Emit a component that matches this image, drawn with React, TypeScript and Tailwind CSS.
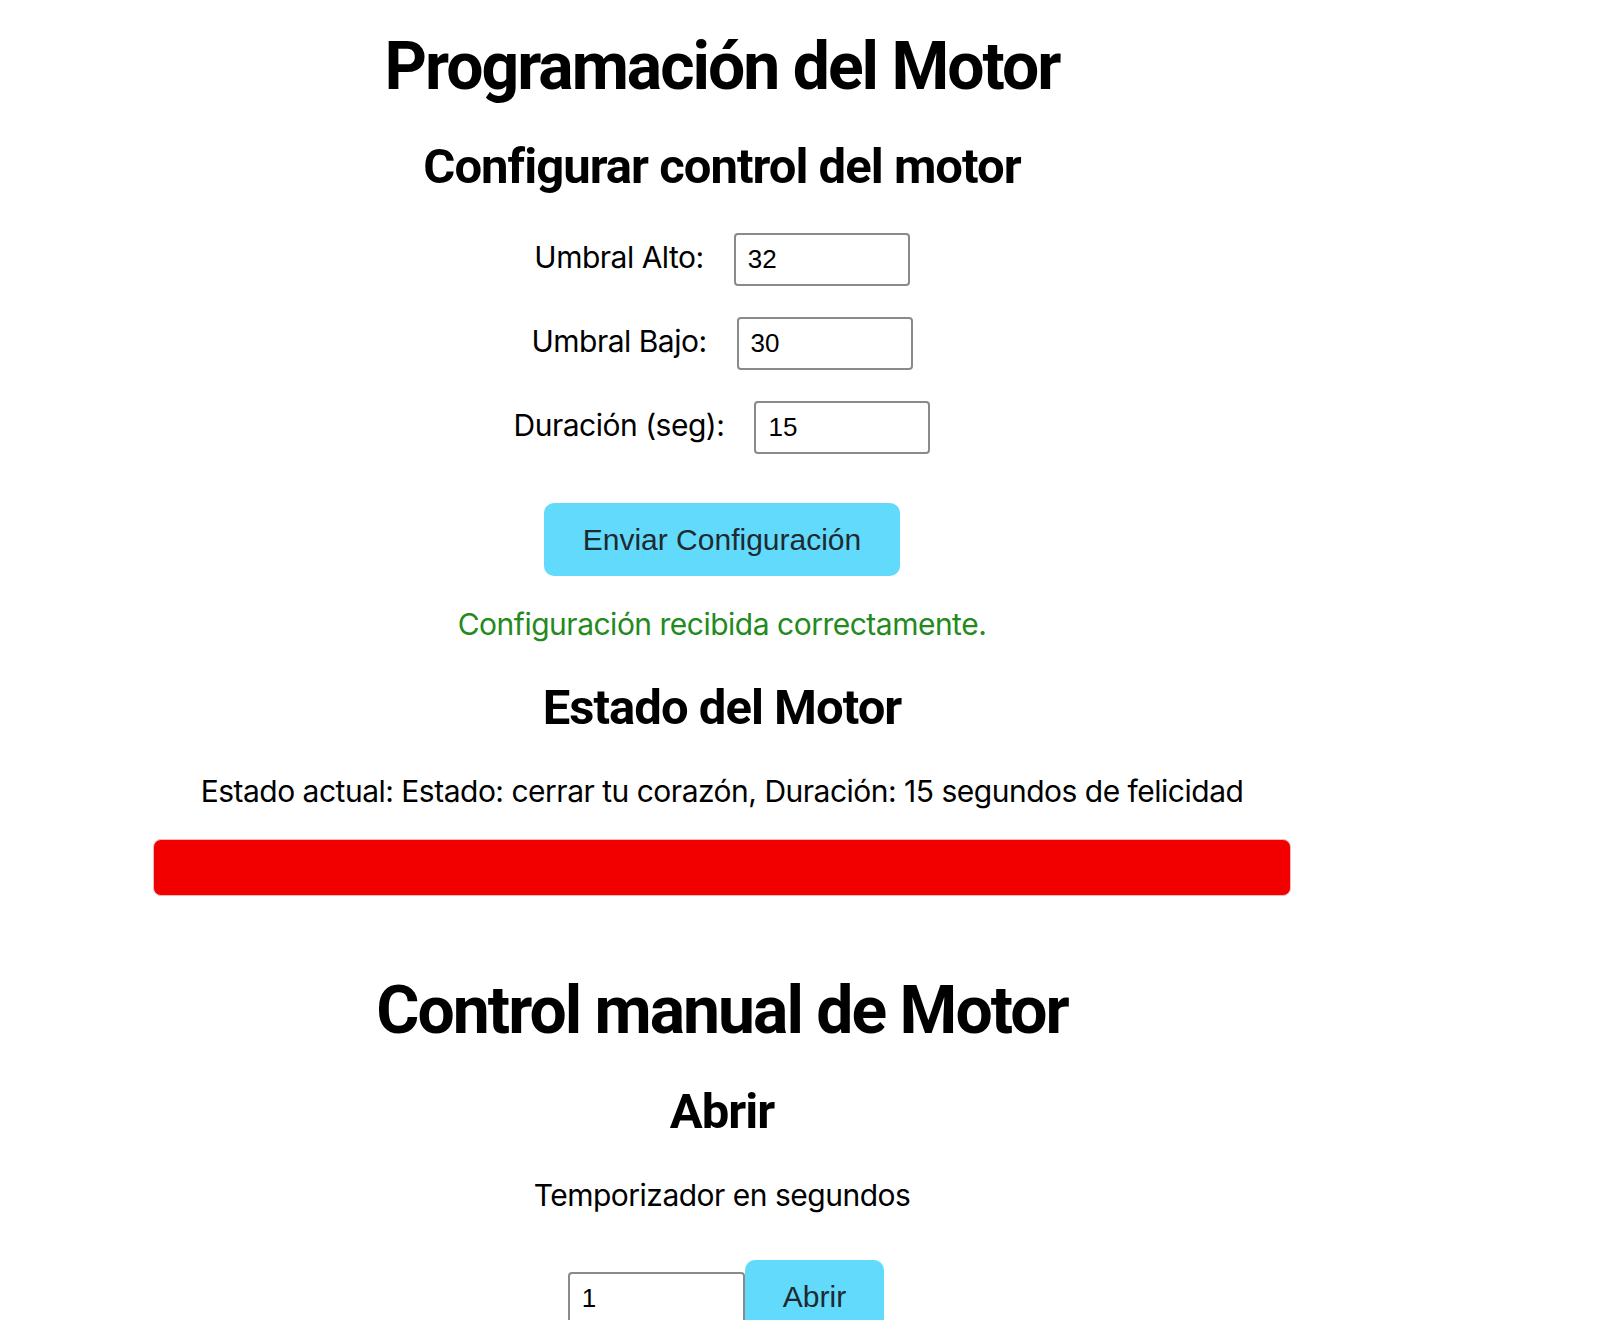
import { useState } from "react";

// campo de configuración: etiqueta + input numérico
function ConfigRow({
  label,
  value,
  onChange,
}: {
  label: string;
  value: string;
  onChange: (v: string) => void;
}) {
  return (
    <div className="flex items-baseline justify-center gap-[30px]">
      <label className="text-[30px] leading-none tracking-[-0.5px] text-black">
        {label}
      </label>
      <input
        type="text"
        value={value}
        onChange={(e) => onChange(e.target.value)}
        className="w-[176px] h-[53px] px-[12px] border-2 border-[#8a8a8a] rounded-[4px] bg-white text-[26px] text-black font-['Liberation_Sans',Arial,sans-serif] outline-none"
      />
    </div>
  );
}

export default function App() {
  const [alto, setAlto] = useState("32");
  const [bajo, setBajo] = useState("30");
  const [duracion, setDuracion] = useState("15");
  const [timer, setTimer] = useState("1");

  return (
    <div className="min-h-screen bg-white overflow-hidden">
      <div className="w-[1444px] flex flex-col items-center text-center font-['Inter','Noto_Sans',sans-serif] text-black">
        {/* Programación */}
        <h1 className="mt-[34px] font-['Roboto',sans-serif] text-[66px] font-bold leading-none tracking-[-0.03em]">
          Programación del Motor
        </h1>
        <h2 className="mt-[42px] font-['Roboto',sans-serif] text-[49px] font-bold leading-none tracking-[-0.02em]">
          Configurar control del motor
        </h2>

        <div className="mt-[42px] flex flex-col gap-[31px]">
          <ConfigRow label="Umbral Alto:" value={alto} onChange={setAlto} />
          <ConfigRow label="Umbral Bajo:" value={bajo} onChange={setBajo} />
          <ConfigRow
            label="Duración (seg):"
            value={duracion}
            onChange={setDuracion}
          />
        </div>

        <button className="mt-[49px] h-[73px] px-[39px] rounded-[10px] bg-[#61dafb] text-[30px] text-[#1e2a30] font-['Liberation_Sans',Arial,sans-serif]">
          Enviar Configuración
        </button>

        <p className="mt-[33px] text-[30px] leading-none tracking-[-0.5px] text-[#248a1e]">
          Configuración recibida correctamente.
        </p>

        {/* Estado */}
        <h2 className="mt-[44px] font-['Roboto',sans-serif] text-[49px] font-bold leading-none tracking-[-0.02em]">
          Estado del Motor
        </h2>
        <p className="mt-[44px] text-[30px] leading-none tracking-[-0.5px]">
          Estado actual: Estado: cerrar tu corazón, Duración: 15 segundos de felicidad
        </p>
        <div className="mt-[33px] w-[1138px] h-[57px] rounded-[8px] bg-[#f20000] border border-[#f3b8b8]" />

        {/* Control manual */}
        <h1 className="mt-[82px] font-['Roboto',sans-serif] text-[66px] font-bold leading-none tracking-[-0.03em]">
          Control manual de Motor
        </h1>
        <h2 className="mt-[43px] font-['Roboto',sans-serif] text-[49px] font-bold leading-none tracking-[-0.02em]">
          Abrir
        </h2>
        <p className="mt-[44px] text-[30px] leading-none tracking-[-0.5px]">
          Temporizador en segundos
        </p>

        <div className="mt-[50px] ml-[8px] flex items-baseline justify-center">
          <input
            type="text"
            value={timer}
            onChange={(e) => setTimer(e.target.value)}
            className="w-[177px] h-[53px] px-[12px] border-2 border-[#8a8a8a] rounded-[4px] bg-white text-[26px] text-black font-['Liberation_Sans',Arial,sans-serif] outline-none"
          />
          <button className="h-[73px] px-[38px] rounded-[10px] bg-[#61dafb] text-[30px] text-[#1e2a30] font-['Liberation_Sans',Arial,sans-serif]">
            Abrir
          </button>
        </div>
      </div>
    </div>
  );
}
